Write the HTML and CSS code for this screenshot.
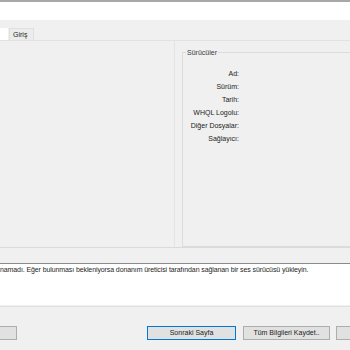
FILE: index.html
```html
<!DOCTYPE html>
<html>
<head>
<meta charset="utf-8">
<link rel="stylesheet" href="styles.css">
</head>
<body>
<div class="window">
  <div class="topline"></div>
  <div class="whiteband"></div>
  <div class="tabs">
    <div class="tab tab-active"></div>
    <div class="tab">Giriş</div>
  </div>
  <div class="page">
    <div class="content">
      <div class="leftpane"></div>
      <fieldset class="group">
        <legend>Sürücüler</legend>
        <div class="rows">
          <div class="row">Ad:</div>
          <div class="row">Sürüm:</div>
          <div class="row">Tarih:</div>
          <div class="row">WHQL Logolu:</div>
          <div class="row">Diğer Dosyalar:</div>
          <div class="row">Sağlayıcı:</div>
        </div>
      </fieldset>
    </div>
  </div>
  <div class="notes">namadı. Eğer bulunması bekleniyorsa donanım üreticisi tarafından sağlanan bir ses sürücüsü yükleyin.</div>
  <div class="buttons">
    <div class="btn btn-left"></div>
    <div class="spacer"></div>
    <div class="btn btn-default">Sonraki Sayfa</div>
    <div class="btn btn-save">Tüm Bilgileri Kaydet..</div>
    <div class="btn btn-right"></div>
  </div>
</div>
</body>
</html>
```

FILE: styles.css
```css
html, body {
  margin: 0;
  padding: 0;
  background: #f0f0f0;
}
.window {
  width: 350px;
  height: 350px;
  overflow: hidden;
  font-family: "Liberation Sans", Arial, sans-serif;
  font-size: 7px;
  color: #222222;
  display: flex;
  flex-direction: column;
  background: #f0f0f0;
}
.topline {
  height: 2px;
  background: #a8a8a8;
  flex: none;
}
.whiteband {
  height: 18px;
  background: #ffffff;
  flex: none;
}
.tabs {
  flex: none;
  display: flex;
  align-items: flex-end;
  margin-top: 8px;
  height: 12px;
  gap: 1px;
}
.tab {
  height: 12px;
  box-sizing: border-box;
  padding: 0 6px 0 3px;
  line-height: 12px;
  border: 1px solid #e0e0e0;
  border-bottom: none;
  background: #ececec;
}
.tab-active {
  width: 8px;
  padding: 0;
  background: #ffffff;
  border: none;
}
.page {
  flex: none;
  height: 208px;
  border-top: 1px solid #e2e2e2;
  border-bottom: 1px solid #dadada;
  box-sizing: border-box;
}
.content {
  display: flex;
  height: 100%;
  padding-top: 8px;
  box-sizing: border-box;
}
.leftpane {
  width: 174px;
  border-right: 1px solid #e4e4e4;
  margin-top: -8px;
  flex: none;
}
.group {
  margin: 0 0 0 7px;
  padding: 0;
  border: 1px solid #dcdcdc;
  border-right: none;
  height: 198px;
  box-sizing: border-box;
  flex: 1;
  min-width: 0;
}
.group legend {
  margin-left: 3px;
  padding: 0 1px;
  font-size: 7px;
  color: #3a3a3a;
}
.rows {
  width: 56px;
  display: flex;
  flex-direction: column;
  align-items: flex-end;
  padding-top: 11px;
}
.row {
  height: 13px;
  line-height: 13px;
  white-space: nowrap;
}
.notes {
  flex: none;
  margin-top: 15px;
  height: 42px;
  box-sizing: border-box;
  background: #ffffff;
  border-top: 1px solid #8a8a8a;
  padding: 2px 0 0 0;
  white-space: nowrap;
  font-size: 7px;
  letter-spacing: -0.1px;
  color: #1e1e1e;
}
.buttons {
  flex: none;
  border-top: 1px solid #e0e0e0;
  margin-top: 1px;
  padding-top: 19px;
  display: flex;
  gap: 7px;
  height: 14px;
}
.btn {
  height: 14px;
  box-sizing: border-box;
  border: 1px solid #adadad;
  background: #e1e1e1;
  line-height: 12px;
  text-align: center;
  font-size: 7px;
  flex: none;
}
.btn-left {
  width: 18px;
  margin-left: -1px;
  border-left: none;
}
.spacer {
  flex: 1;
}
.btn-default {
  width: 89px;
  border: 1px solid #0078d7;
}
.btn-save {
  width: 87px;
}
.btn-right {
  width: 20px;
  margin-left: -1px;
  margin-right: -6px;
}
```
